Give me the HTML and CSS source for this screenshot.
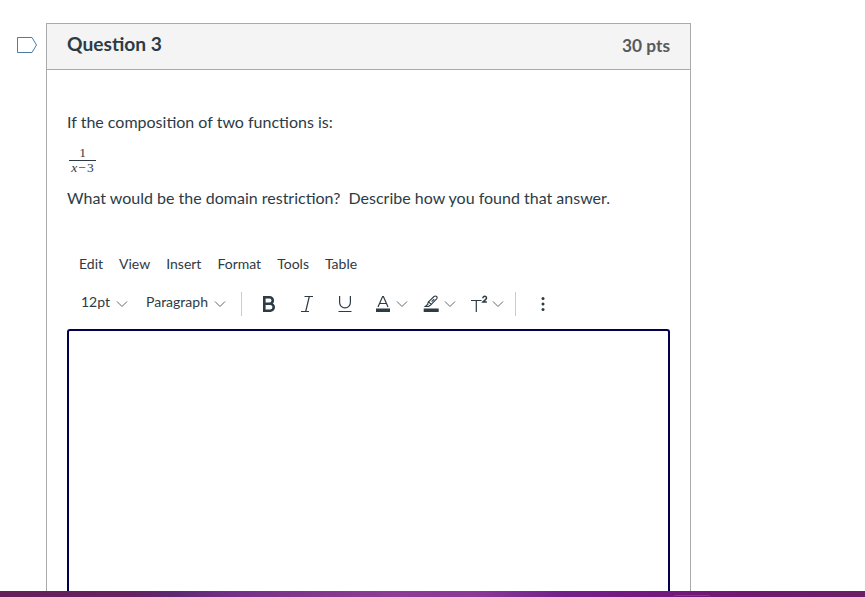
FILE: index.html
```
<!DOCTYPE html>
<html lang="en">
<head>
    <meta charset="UTF-8">
    <meta name="viewport" content="width=device-width, initial-scale=1.0">
    <title>Question 3</title>
    <link rel="stylesheet" href="styles.css">
</head>
<body>
    <main class="quiz">
        <svg class="flag" width="21" height="18" viewBox="0 0 21 18">
            <path d="M.5 1.5h14.5l4.5 7.5-4.5 7.5H.5z"/>
        </svg>
        <section class="question">
            <header class="question-header">
                <h1>Question 3</h1>
                <span class="points">30 pts</span>
            </header>
            <div class="question-text">
                <p>If the composition of two functions is:</p>
                <div class="fraction">
                    <span class="numerator">1</span>
                    <span class="denominator"><i>x</i><span class="minus">−</span>3</span>
                </div>
                <p>What would be the domain restriction?&nbsp; Describe how you found that answer.</p>
            </div>
            <div class="editor">
                <nav class="menubar">
                    <span>Edit</span>
                    <span>View</span>
                    <span>Insert</span>
                    <span>Format</span>
                    <span>Tools</span>
                    <span>Table</span>
                </nav>
                <div class="toolbar">
                    <div class="select size">12pt <svg class="chevron" width="12" height="8" viewBox="0 0 12 8"><path d="M1 1.5l5 5 5-5"/></svg></div>
                    <div class="select block">Paragraph <svg class="chevron" width="12" height="8" viewBox="0 0 12 8"><path d="M1 1.5l5 5 5-5"/></svg></div>
                    <div class="divider"></div>
                    <svg class="icon bold" width="14" height="18" viewBox="0 0 14 18">
                        <path d="M2.3 2.2h5.2a3.1 3.1 0 0 1 0 6.6H2.3zM2.3 8.8h6a3.4 3.4 0 0 1 0 6.9h-6z"/>
                    </svg>
                    <svg class="icon italic" width="14" height="18" viewBox="0 0 14 18">
                        <path d="M4.5 1.5H13M1 16.5h8M9.3 1.5l-3.6 15"/>
                    </svg>
                    <svg class="icon underline" width="14" height="18" viewBox="0 0 14 18">
                        <path d="M1.6 1v6.5a5.4 5.4 0 0 0 10.8 0V1M.5 16.5h13"/>
                    </svg>
                    <svg class="icon color" width="16" height="18" viewBox="0 0 16 18">
                        <path d="M3 12L7.6 1.5h.8L13 12M4.5 8.5h7"/>
                        <rect x="1" y="13.5" width="14" height="3.5"/>
                    </svg>
                    <svg class="chevron" width="12" height="8" viewBox="0 0 12 8"><path d="M1 1.5l5 5 5-5"/></svg>
                    <svg class="icon highlight" width="16" height="18" viewBox="0 0 16 18">
                        <path d="M5.5 6.8L11 1.5q1.5-1 2.6 0t0 2.4L8.3 9.4q-.8 1.2-1.9 1.1l-.6 1H2.2l2.7-2.3q-.3-1.2.6-2.4l2.8 2.6M8.6 6.7l2.6-2.6"/>
                        <rect x=".7" y="13.5" width="15" height="3.5"/>
                    </svg>
                    <svg class="chevron" width="12" height="8" viewBox="0 0 12 8"><path d="M1 1.5l5 5 5-5"/></svg>
                    <svg class="icon super" width="18" height="18" viewBox="0 0 18 18">
                        <path d="M0 5.5h10.5M5.3 5.5V17"/>
                        <path class="two" d="M11.9 3.2c0-2.6 3.8-2.4 3.6-.1-.1 1.3-2.3 2.3-3.6 3.9h4"/>
                    </svg>
                    <svg class="chevron" width="12" height="8" viewBox="0 0 12 8"><path d="M1 1.5l5 5 5-5"/></svg>
                    <div class="divider last"></div>
                    <svg class="more" width="4" height="16" viewBox="0 0 4 16">
                        <circle cx="2" cy="2.5" r="1.5"/>
                        <circle cx="2" cy="8" r="1.5"/>
                        <circle cx="2" cy="13.5" r="1.5"/>
                    </svg>
                </div>
                <div class="edit-area"></div>
            </div>
        </section>
    </main>
    <footer class="taskbar"><div class="task"></div></footer>
</body>
</html>
```
FILE: styles.css
```
* {
    box-sizing: border-box;
}
body {
    margin: 0;
    height: 597px;
    display: flex;
    flex-direction: column;
    overflow: hidden;
    background: #fff;
    color: #2d3b45;
    font-family: Lato, sans-serif;
    font-size: 16px;
}
.quiz {
    display: flex;
    align-items: flex-start;
    height: 591px;
    padding: 23px 0 0 17px;
    overflow: hidden;
}
.flag {
    margin: 13px 8px 0 0;
    fill: none;
    stroke: #4c7ea3;
}
.question {
    width: 645px;
    height: 700px;
    border: 1px solid #aaa;
}
.question-header {
    display: flex;
    justify-content: space-between;
    height: 46px;
    padding: 0 20px;
    background: #f4f4f4;
    border-bottom: 1px solid #aaa;
}
h1 {
    margin: 0;
    font-size: 19.2px;
    line-height: 40px;
}
.points {
    color: #595959;
    font-size: 17.3px;
    font-weight: bold;
    line-height: 44px;
}
.question-text {
    padding: 40px 20px 0;
}
p {
    margin: 0;
    line-height: 24px;
}
.fraction {
    width: 27px;
    height: 28px;
    margin: 13px 0 11px 2px;
    font-family: "Liberation Serif", serif;
    font-size: 13.5px;
    text-align: center;
}
.numerator,
.denominator {
    display: block;
    height: 14px;
    line-height: 12px;
}
.numerator {
    border-bottom: 1px solid #2d3b45;
}
.denominator {
    line-height: 14px;
}
.minus {
    margin: 0 1px;
}
.editor {
    padding: 43px 20px 0;
}
.menubar {
    display: flex;
    gap: 16px;
    padding-left: 12px;
    font-size: 14px;
    line-height: 22px;
}
.toolbar {
    display: flex;
    align-items: center;
    height: 34px;
    margin: 12px 0 8px;
    padding-left: 14px;
}
.select {
    display: flex;
    align-items: center;
    justify-content: space-between;
    height: 20px;
    font-size: 14px;
    line-height: 20px;
    margin-bottom: 4px;
}
.select .chevron {
    margin-top: 4px;
}
.size {
    width: 47px;
    margin-right: 18px;
}
.block {
    width: 80px;
}
.divider {
    width: 1px;
    height: 24px;
    margin: 0 20px 0 15px;
    background: #c7cdd1;
}
.last {
    margin: 0 25px 0 11px;
}
.chevron {
    fill: none;
    stroke: #5c6770;
}
.icon {
    fill: none;
    stroke: #2d3b45;
    stroke-width: 1.2;
}
.icon rect,
.more {
    fill: #2d3b45;
    stroke: none;
}
.bold {
    stroke-width: 2.6;
}
.italic {
    margin-left: 24px;
}
.underline {
    margin-left: 24px;
}
.color {
    margin: 0 5px 0 23px;
}
.highlight {
    margin: 0 5px 0 15px;
    stroke-width: 1.1;
}
.super {
    margin: 0 3px 0 15px;
}
.two {
    stroke-width: 1.5;
}
.edit-area {
    height: 400px;
    border: 2px solid #00004f;
    border-radius: 3px;
}
.taskbar {
    height: 6px;
    padding-left: 673px;
    background: linear-gradient(90deg, #642058, #672260 15%, #5c2a70 20%, #743087 27%, #81368b 35%, #8e3c94 45%, #8b3897 55%, #73208b 65%, #74187f 75%, #6f196e 88%, #6b1f66);
}
.task {
    width: 38px;
    height: 3px;
    margin-top: 4px;
    border-top: 1px solid #8a3a8d;
    border-radius: 3px 3px 0 0;
}
```
